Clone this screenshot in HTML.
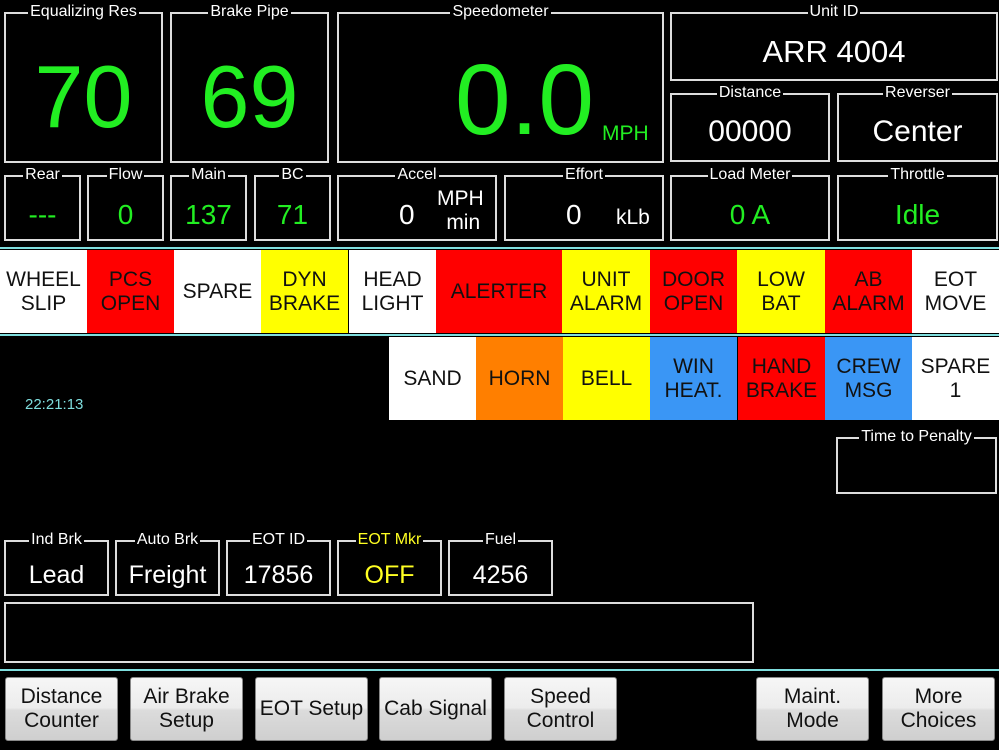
<!DOCTYPE html><html><head><style>
body{margin:0;width:999px;height:750px;background:#000;position:relative;overflow:hidden;font-family:"Liberation Sans",Arial,sans-serif;color:#fff}
.b{position:absolute;border:2px solid #ddd;box-sizing:border-box}
.l{position:absolute;top:-11px;left:0;right:0;text-align:center;font-size:16px;line-height:18px}
.l span{background:#000;padding:0 2px}
.v{position:absolute;left:0;right:0;text-align:center;white-space:nowrap}
.g{color:#22ee22}
.c{position:absolute;display:flex;align-items:center;justify-content:center;text-align:center;font-size:21px;line-height:24px;color:#111;box-sizing:border-box}
.hl{position:absolute;left:0;width:999px;height:2px;background:#7fdede}
.bt{position:absolute;top:677px;height:64px;width:113px;box-sizing:border-box;border:1px solid #888;border-radius:3px;background:linear-gradient(#f6f6f6 0%,#ececec 48%,#dcdcdc 52%,#cfcfcf 100%);color:#111;font-size:21px;line-height:24px;display:flex;align-items:center;justify-content:center;text-align:center}
</style></head><body>
<div class="b" style="left:4px;top:12px;width:159px;height:151px"><div class="l"><span>Equalizing Res</span></div><div class="v g" style="top:38px;font-size:88px;line-height:90px">70</div></div>
<div class="b" style="left:170px;top:12px;width:159px;height:151px"><div class="l"><span>Brake Pipe</span></div><div class="v g" style="top:38px;font-size:88px;line-height:90px">69</div></div>
<div class="b" style="left:337px;top:12px;width:327px;height:151px"><div class="l"><span>Speedometer</span></div><div class="g" style="position:absolute;left:116px;top:36px;font-size:100px;line-height:100px">0.0</div><div class="g" style="position:absolute;left:263px;top:108px;font-size:21px">MPH</div></div>
<div class="b" style="left:670px;top:12px;width:328px;height:69px"><div class="l"><span>Unit ID</span></div><div class="v" style="top:21px;font-size:31px;line-height:34px">ARR 4004</div></div>
<div class="b" style="left:670px;top:93px;width:160px;height:69px"><div class="l"><span>Distance</span></div><div class="v" style="top:20px;font-size:30px;line-height:34px">00000</div></div>
<div class="b" style="left:837px;top:93px;width:161px;height:69px"><div class="l"><span>Reverser</span></div><div class="v" style="top:20px;font-size:30px;line-height:34px">Center</div></div>

<div class="b" style="left:4px;top:175px;width:77px;height:66px"><div class="l"><span>Rear</span></div><div class="v g" style="top:22px;font-size:28px;line-height:32px">---</div></div>
<div class="b" style="left:87px;top:175px;width:77px;height:66px"><div class="l"><span>Flow</span></div><div class="v g" style="top:22px;font-size:28px;line-height:32px">0</div></div>
<div class="b" style="left:170px;top:175px;width:77px;height:66px"><div class="l"><span>Main</span></div><div class="v g" style="top:22px;font-size:28px;line-height:32px">137</div></div>
<div class="b" style="left:254px;top:175px;width:77px;height:66px"><div class="l"><span>BC</span></div><div class="v g" style="top:22px;font-size:28px;line-height:32px">71</div></div>
<div class="b" style="left:337px;top:175px;width:160px;height:66px"><div class="l"><span>Accel</span></div><div style="position:absolute;left:60px;top:22px;font-size:28px;line-height:32px">0</div><div style="position:absolute;left:98px;top:10px;font-size:21px;line-height:24px;text-align:center">MPH<br>&nbsp;min</div></div>
<div class="b" style="left:504px;top:175px;width:160px;height:66px"><div class="l"><span>Effort</span></div><div style="position:absolute;left:60px;top:22px;font-size:28px;line-height:32px">0</div><div style="position:absolute;left:110px;top:29px;font-size:21px;line-height:24px">kLb</div></div>
<div class="b" style="left:670px;top:175px;width:160px;height:66px"><div class="l"><span>Load Meter</span></div><div class="v g" style="top:22px;font-size:28px;line-height:32px">0 A</div></div>
<div class="b" style="left:837px;top:175px;width:161px;height:66px"><div class="l"><span>Throttle</span></div><div class="v g" style="top:22px;font-size:28px;line-height:32px">Idle</div></div>

<div class="hl" style="top:247px"></div>
<div class="c" style="left:0;top:250px;width:87px;height:83px;background:#fff">WHEEL<br>SLIP</div>
<div class="c" style="left:87px;top:250px;width:87px;height:83px;background:#f00">PCS<br>OPEN</div>
<div class="c" style="left:174px;top:250px;width:87px;height:83px;background:#fff">SPARE</div>
<div class="c" style="left:261px;top:250px;width:87px;height:83px;background:#ff0">DYN<br>BRAKE</div>
<div class="c" style="left:348px;top:250px;width:88px;height:83px;background:#fff;border-left:1px solid #000">HEAD<br>LIGHT</div>
<div class="c" style="left:436px;top:250px;width:126px;height:83px;background:#f00">ALERTER</div>
<div class="c" style="left:562px;top:250px;width:88px;height:83px;background:#ff0">UNIT<br>ALARM</div>
<div class="c" style="left:650px;top:250px;width:87px;height:83px;background:#f00">DOOR<br>OPEN</div>
<div class="c" style="left:737px;top:250px;width:88px;height:83px;background:#ff0">LOW<br>BAT</div>
<div class="c" style="left:825px;top:250px;width:87px;height:83px;background:#f00">AB<br>ALARM</div>
<div class="c" style="left:912px;top:250px;width:87px;height:83px;background:#fff">EOT<br>MOVE</div>
<div class="hl" style="top:334px"></div>
<div class="c" style="left:389px;top:337px;width:87px;height:83px;background:#fff">SAND</div>
<div class="c" style="left:476px;top:337px;width:87px;height:83px;background:#ff7f00">HORN</div>
<div class="c" style="left:563px;top:337px;width:87px;height:83px;background:#ff0">BELL</div>
<div class="c" style="left:650px;top:337px;width:87px;height:83px;background:#3a96f5">WIN<br>HEAT.</div>
<div class="c" style="left:737px;top:337px;width:88px;height:83px;background:#f00;border-left:1px solid #000">HAND<br>BRAKE</div>
<div class="c" style="left:825px;top:337px;width:87px;height:83px;background:#3a96f5">CREW<br>MSG</div>
<div class="c" style="left:912px;top:337px;width:87px;height:83px;background:#fff">SPARE<br>1</div>
<div style="position:absolute;left:25px;top:396px;font-size:15px;color:#7fdede">22:21:13</div>
<div class="b" style="left:836px;top:437px;width:161px;height:57px"><div class="l"><span>Time to Penalty</span></div></div>

<div class="b" style="left:4px;top:540px;width:105px;height:56px"><div class="l"><span>Ind Brk</span></div><div class="v" style="top:19px;font-size:25px;line-height:28px">Lead</div></div>
<div class="b" style="left:115px;top:540px;width:105px;height:56px"><div class="l"><span>Auto Brk</span></div><div class="v" style="top:19px;font-size:25px;line-height:28px">Freight</div></div>
<div class="b" style="left:226px;top:540px;width:105px;height:56px"><div class="l"><span>EOT ID</span></div><div class="v" style="top:19px;font-size:25px;line-height:28px">17856</div></div>
<div class="b" style="left:337px;top:540px;width:105px;height:56px"><div class="l" style="color:#ff2"><span>EOT Mkr</span></div><div class="v" style="top:19px;font-size:25px;line-height:28px;color:#ff2">OFF</div></div>
<div class="b" style="left:448px;top:540px;width:105px;height:56px"><div class="l"><span>Fuel</span></div><div class="v" style="top:19px;font-size:25px;line-height:28px">4256</div></div>
<div class="b" style="left:4px;top:602px;width:750px;height:61px"></div>
<div class="hl" style="top:669px"></div>
<div class="bt" style="left:5px">Distance<br>Counter</div>
<div class="bt" style="left:130px">Air Brake<br>Setup</div>
<div class="bt" style="left:255px">EOT Setup</div>
<div class="bt" style="left:379px">Cab Signal</div>
<div class="bt" style="left:504px">Speed<br>Control</div>
<div class="bt" style="left:756px">Maint.<br>Mode</div>
<div class="bt" style="left:882px">More<br>Choices</div>
</body></html>
